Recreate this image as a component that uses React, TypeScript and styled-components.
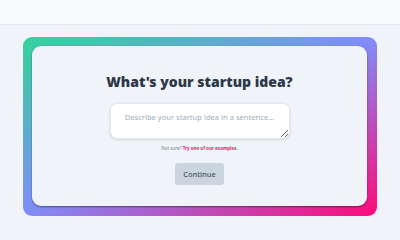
import styled, { createGlobalStyle } from "styled-components";

const GlobalStyle = createGlobalStyle`
  html, body {
    margin: 0;
    height: 225px;
    overflow: hidden;
  }
  body {
    background: #f0f4f8;
    font-family: "Noto Sans", "Open Sans", sans-serif;
  }
`;

const Header = styled.header`
  height: 24px;
  background: #f8fafc;
  border-bottom: 1px solid #e2e8f0;
`;

const Main = styled.main`
  padding: 12px 23px 9px;
`;

const Frame = styled.div`
  padding: 9px 10px 10px 9px;
  border-radius: 9px;
  background: linear-gradient(to bottom right, #34d399 0%, #818cf8 50%, #ff0a78 100%);
`;

const Card = styled.div`
  height: 160px;
  box-sizing: border-box;
  border-radius: 9px;
  background: #f0f4f8;
  box-shadow: 0 1px 2px rgba(0, 0, 0, 0.45);
  display: flex;
  flex-direction: column;
  align-items: center;
  padding-top: 26px;
`;

const Title = styled.h1`
  margin: 0;
  font-size: 14px;
  line-height: 20px;
  font-weight: 900;
  color: #2d3748;
`;

const Idea = styled.textarea`
  display: block;
  margin-top: 11px;
  width: 180px;
  height: 36px;
  box-sizing: border-box;
  border: 1px solid #e2e8f0;
  border-radius: 7px;
  background: #fff;
  box-shadow: 0 1px 3px rgba(0, 0, 0, 0.12);
  padding: 8px 8px;
  font-family: inherit;
  font-size: 7.6px;
  line-height: 10px;
  text-align: center;
  color: #2d3748;
  resize: vertical;
  &::placeholder {
    color: #a0aec0;
  }
`;

const Hint = styled.p`
  margin: 6px 0 0;
  font-size: 4.5px;
  line-height: 6px;
  color: #718096;
`;

const HintLink = styled.a`
  color: #f0176f;
  font-weight: 700;
`;

const Button = styled.button`
  margin-top: 12px;
  width: 49px;
  height: 22px;
  border: none;
  border-radius: 3px;
  background: #cbd5e0;
  color: #4a5568;
  font-family: inherit;
  font-size: 7.5px;
  font-weight: 500;
`;

export default function App() {
  return (
    <>
      <GlobalStyle />
      <Header />
      <Main>
        <Frame>
          <Card>
            <Title>What's your startup idea?</Title>
            <Idea placeholder="Describe your startup idea in a sentence..." />
            <Hint>
              Not sure? <HintLink>Try one of our examples.</HintLink>
            </Hint>
            <Button>Continue</Button>
          </Card>
        </Frame>
      </Main>
    </>
  );
}
